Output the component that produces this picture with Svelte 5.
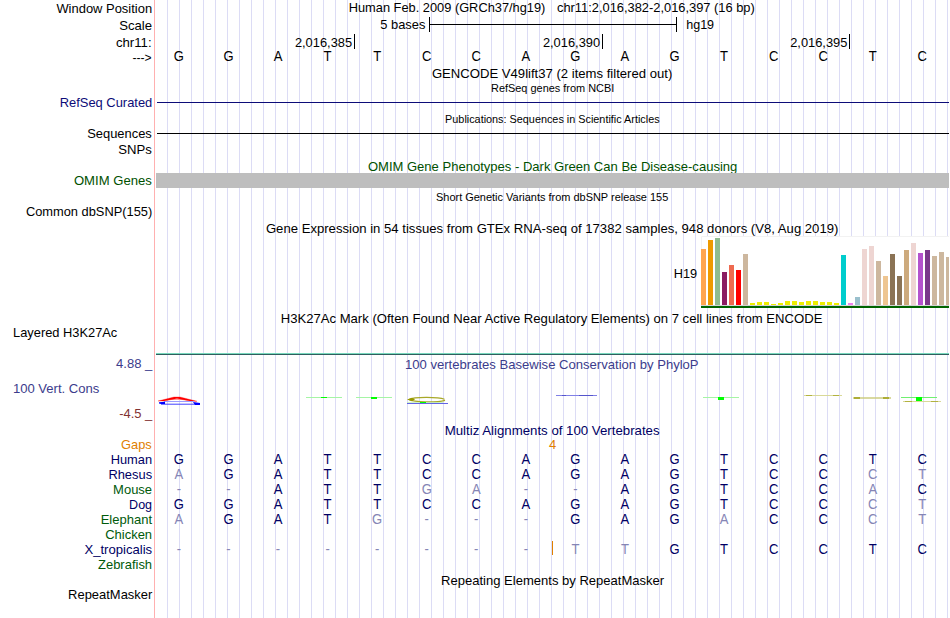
<script>
  const human = 'GGATTCCAGAGTCCTC';
  const baseWidth = { G: 10.1, A: 8.7, C: 9.4, T: 8, '-': 4.3 };

  // Text marks are [text, left, right, baseline, color?, size?] in image pixels.
  const rows = [
    { h: 16, label: ['Window Position', 56, 152.5, 13], text: [
      ['Human Feb. 2009 (GRCh37/hg19)', 348.3, 545.8, 12],
      ['chr11:2,016,382-2,016,397 (16 bp)', 556.6, 755.2, 12] ] },
    { h: 17, kind: 'scale', label: ['Scale', 118.8, 152.5, 30], text: [
      ['5 bases', 379.8, 425.8, 29], ['hg19', 685.8, 714.5, 29] ] },
    { h: 16, kind: 'ticks', label: ['chr11:', 115.5, 152, 47], text: [
      ['2,016,385', 294.5, 352.5, 47], ['2,016,390', 542.5, 600.5, 47], ['2,016,395', 789.8, 847.8, 47] ] },
    { h: 16, label: ['--->', 132, 152, 62], bases: human, color: '#000', y: 61 },
    { h: 16, text: [['GENCODE V49lift37 (2 items filtered out)', 431.5, 672.7, 78]] },
    { h: 14, text: [['RefSeq genes from NCBI', 490.6, 614.7, 92, '#000', 11]] },
    { h: 16, label: ['RefSeq Curated', 59.3, 152.7, 107, '#0c0c78'], line: [157, 102, 792, 1, '#0c0c78'] },
    { h: 15, text: [['Publications: Sequences in Scientific Articles', 444.7, 660, 123, '#000', 11]] },
    { h: 16, label: ['Sequences', 86.8, 152.2, 138], line: [157, 133, 792, 1, '#000'] },
    { h: 16, label: ['SNPs', 117.8, 152.2, 154] },
    { h: 15, text: [['OMIM Gene Phenotypes - Dark Green Can Be Disease-causing', 367.5, 737.7, 171, '#005000']] },
    { h: 15, label: ['OMIM Genes', 73.5, 152.2, 185, '#005000'], line: [156, 173, 793, 15, '#bebebe'] },
    { h: 15, text: [['Short Genetic Variants from dbSNP release 155', 435.6, 668.7, 201, '#000', 11]] },
    { h: 16, label: ['Common dbSNP(155)', 25.5, 152.7, 216] },
    { h: 17, text: [['Gene Expression in 54 tissues from GTEx RNA-seq of 17382 samples, 948 donors (V8, Aug 2019)', 265.5, 838.8, 233]] },
    { h: 73, kind: 'gtex', text: [['H19', 673.3, 697.5, 278]] },
    { h: 16, text: [['H3K27Ac Mark (Often Found Near Active Regulatory Elements) on 7 cell lines from ENCODE', 280.3, 822.8, 323]] },
    { h: 31, kind: 'histone', label: ['Layered H3K27Ac', 12.7, 117.7, 337] },
    { h: 65, kind: 'conservation', labels: [
      ['4.88 _', 115.6, 152.7, 368, '#3c3c8c'],
      ['100 Vert. Cons', 12.5, 99.8, 393, '#3c3c8c'],
      ['-4.5 _', 118.8, 152.7, 418, '#823232'] ],
      text: [['100 vertebrates Basewise Conservation by PhyloP', 404.6, 699, 369, '#3c3c8c']] },
    { h: 16, text: [['Multiz Alignments of 100 Vertebrates', 444.3, 660, 435, '#000064']] },
    { h: 15, label: ['Gaps', 120.7, 152.2, 449, '#e08000'], text: [['4', 548.5, 556.5, 449, '#e08000']] },
    species('Human', 110.3, 464, human),
    species('Rhesus', 108, 479, 'AGATTCCAGAGTCCCT'),
    species('Mouse', 112.7, 494, '--ATTGA--AGTCCAC', true),
    species('Dog', 128.7, 509, 'GGATTCCAGAGTCCCT'),
    species('Elephant', 100.3, 524, 'AGATG---GAGACCCT', true),
    species('Chicken', 104.8, 539, '', true),
    { ...species('X_tropicalis', 84, 554, '--------TTGTCCTC'), line: [552, 541, 1, 14, '#e08000'] },
    species('Zebrafish', 97.6, 569, '', true),
    { h: 15, text: [['Repeating Elements by RepeatMasker', 440.7, 664.6, 585]] },
    { h: 31, label: ['RepeatMasker', 67.7, 152.7, 599] }
  ];

  let offset = 0;
  for (const row of rows) {
    row.top = offset;
    offset += row.h;
  }

  function species(name, left, y, bases, green = false) {
    return { h: 15, y, bases, color: '#000064', label: [name, left, 152.5, y, green ? '#005a0a' : '#000064'] };
  }

  const yellow = '#eeee00';
  const bars = [
    ['#ffa54f', 249], ['#ee9a00', 240], ['#8fbc8f', 238], ['#8b1c62', 272], ['#ee6a50', 265],
    ['#ff0000', 270], ['#cdb79e', 254],
    ...[303, 302, 302, 304, 303, 301, 301, 302, 301, 301, 302, 302, 303].map((y) => [yellow, y]),
    ['#00cdcd', 255], ['#ee82ee', 303], ['#9ac0cd', 297], ['#eed5d2', 249], ['#eed5d2', 246],
    ['#cdb79e', 261], ['#eec591', 276], ['#8b7355', 254], ['#8b7355', 276], ['#cdaa7d', 250],
    ['#eed5d2', 243], ['#b452cd', 253], ['#7a378b', 250], ['#cdb79e', 256], ['#cdb79e', 252], ['#cdb79e', 257]
  ];
</script>

{#snippet mark([text, left, right, y, color = '#000', size = 13.3])}
  <text
    x={left + 0.4}
    {y}
    fill={color}
    font-size={size}
    textLength={right - left - 0.8}
    lengthAdjust="spacingAndGlyphs">{text}</text>
{/snippet}

<main class="browser">
  {#each rows as row}
    <div class="row">
      <svg class="label" width="154" height={row.h} viewBox="0 {row.top} 154 {row.h}">
        {#each row.labels ?? (row.label ? [row.label] : []) as item}
          {@render mark(item)}
        {/each}
      </svg>
      <svg class="track" width="794" height={row.h} viewBox="155 {row.top} 794 {row.h}">
        {#if row.line}
          <rect x={row.line[0]} y={row.line[1]} width={row.line[2]} height={row.line[3]} fill={row.line[4]} />
        {/if}

        {#if row.kind === 'scale'}
          <path d="M429.5 17v15M430 24.5h246M676.5 17v15" stroke="#000" />
        {:else if row.kind === 'ticks'}
          <path d="M354.5 34v15M602.5 34v15M849.5 34v15" stroke="#000" />
        {:else if row.kind === 'gtex'}
          <rect x="701" y="236" width="248" height="70" fill="#fff" />
          <path d="M701.5 305V236.5H949" fill="none" stroke="#f2f2f2" />
          <rect x="701" y="305" width="248" height="1" fill="#d3d3d3" />
          {#each bars as [fill, y], i}
            <rect x={701 + i * 7} {y} width={Math.min(5, 248 - i * 7)} height={305 - y} {fill} />
          {/each}
          <rect x="701" y="306" width="248" height="2" fill="#006400" />
        {:else if row.kind === 'histone'}
          <rect x="156" y="353" width="793" height="1" fill="#78d8bc" />
          <rect x="156" y="354" width="793" height="1" fill="#2f5f5f" />
        {:else if row.kind === 'conservation'}
          <path d="M168 399.5H187" stroke="#ff9c9c" />
          <path d="M158 401L170 398L174 397H180L184 398L197 401.3H191L177 398.4L164 401Z" fill="#f00" stroke="#f00" stroke-width=".3" />
          <path d="M164 401.5H194" stroke="#9c9cff" />
          <path d="M161 404.2H198" stroke="#4040ff" />
          <path d="M159 402.2L165 401.8V404H161L159 403.5ZM193 402L200 403V405H195Z" fill="#00f" />

          <path d="M306 397.5H342M356 397.5H392M703 397.5H739" stroke="#a5f5a5" />
          <path d="M901 397.5H937" stroke="#70f070" />
          <path d="M321 397H327V398H321ZM371 397H377V399H371ZM718 397H724V400H718ZM916 397H922V401H916Z" fill="#0f0" />

          <path d="M444.5 399.3C438 396.7 414 396.7 409 399.5C414 402.5 437 402.5 445 400.3" fill="none" stroke="#a8a828" stroke-width="1.2" />
          <path d="M407 399.5L412 397.7L415 399.5L412 401.3Z" fill="#999900" />
          <path d="M407 402.5H443" stroke="#b8efb8" stroke-width=".7" />
          <path d="M407 403.5H448" stroke="#6464e6" />
          <rect x="420" y="402" width="6" height="1" fill="#0f0" />

          <path d="M556 395.5H597" stroke="#8080e6" />
          <path d="M562 395.5H566M579 395.5H593" stroke="#5555cc" />
          <path d="M804 395.5H842M903 401.5H941" stroke="#d9d998" />
          <path d="M806 395.5H812M833 395.5H839M905 401.5H912M931 401.5H938" stroke="#b2b240" />
          <path d="M853 398H891" stroke="#cccc80" stroke-width="1.5" />
          <path d="M854 398H860M883 398H889" stroke="#adad38" stroke-width="2" />
        {/if}

        {#if row.bases}
          {#each row.bases as base, i}
            <text
              class="base"
              class:differs={row.color !== '#000' && base !== human[i]}
              x={178.9 + i * 49.56 - baseWidth[base] / 2}
              y={row.y}
              textLength={baseWidth[base]}
              lengthAdjust="spacingAndGlyphs"
              fill={row.color}>{base}</text>
          {/each}
        {/if}
        {#each row.text ?? [] as item}
          {@render mark(item)}
        {/each}
      </svg>
    </div>
  {/each}
</main>

<style>
  :global(body) {
    background: #fff;
  }
  /* The grid sits behind the drawing so a descender can hang into the next row. */
  .browser {
    display: flex;
    flex-direction: column;
    width: 950px;
    height: 618px;
    overflow: hidden;
    font-family: 'Liberation Sans', Arial, Helvetica, sans-serif;
    background:
      linear-gradient(#fff, #fff) 0 0 / 156px 100% no-repeat,
      linear-gradient(#fff, #fff) 949px 0 / 1px 100% no-repeat,
      linear-gradient(90deg, #dcdcf5 1px, transparent 1px) 155px 0 / 12px 100%;
  }
  .row {
    display: flex;
  }
  svg {
    display: block;
    flex: none;
    overflow: visible;
  }
  .label {
    border-right: 1px solid #ffb0b0;
  }
  .base {
    font-size: 14px;
  }
  .differs {
    fill: #8585b5;
  }
</style>
